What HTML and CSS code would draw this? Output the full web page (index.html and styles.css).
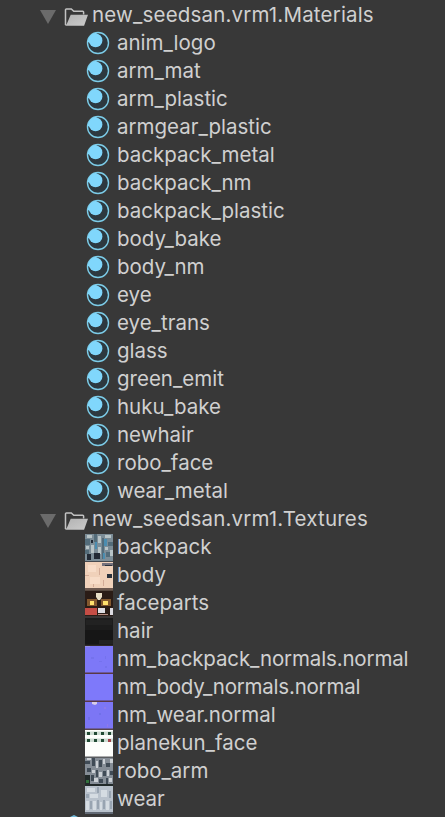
FILE: index.html
```html
<!DOCTYPE html>
<html lang="en">
<head>
<meta charset="utf-8">
<title>Project</title>
<link rel="stylesheet" href="styles.css">
</head>
<body>
<svg class="defs" width="0" height="0" aria-hidden="true">
  <defs>
    <linearGradient id="fold" x1="0" y1="0" x2="1" y2="1"><stop offset="0" stop-color="#b2b2b2"/><stop offset="1" stop-color="#cbcbcb"/></linearGradient>
    <filter id="soft" x="0" y="0" width="1" height="1"><feGaussianBlur stdDeviation=".7" edgeMode="duplicate"/></filter>
  </defs>
  <symbol id="arrow" viewBox="0 0 16 14"><path d="M0 0H16L8 14Z" fill="#6b6b6b"/></symbol>
  <symbol id="folder" viewBox="0 0 24 18">
    <path d="M1.5 17V1.8Q1.5 .9 2.4.9H7.3L9.8 3.2H18.7Q19.6 3.2 19.6 4.1V6.4" fill="none" stroke="#c2c2c2" stroke-width="1.5"/>
    <path d="M6.7 6.8H24L20.1 17.8H1L2.8 16Z" fill="url(#fold)"/>
  </symbol>
  <symbol id="material" viewBox="0 0 24 24">
    <circle cx="12" cy="12" r="10.5" fill="#2d3940" stroke="#7ccce8" stroke-width="1.4"/>
    <circle cx="9.6" cy="9.4" r="6.8" fill="#80d7fc"/>
    <path d="M1.8 11A10 10 0 0 1 11 1.8L8 6L5 12Z" fill="#80d7fc"/>
  </symbol>
  <symbol id="cube" viewBox="0 0 24 24"><path d="M12 0L22 5V17L12 23L2 17V5Z" fill="#70b8d8"/></symbol>
</svg>
<main class="tree">
  <div class="row folder"><svg class="arrow"><use href="#arrow"/></svg><svg class="dir"><use href="#folder"/></svg><span>new_seedsan.vrm1.Materials</span></div>
  <div class="row"><svg class="mat"><use href="#material"/></svg><span>anim_logo</span></div>
  <div class="row"><svg class="mat"><use href="#material"/></svg><span>arm_mat</span></div>
  <div class="row"><svg class="mat"><use href="#material"/></svg><span>arm_plastic</span></div>
  <div class="row"><svg class="mat"><use href="#material"/></svg><span>armgear_plastic</span></div>
  <div class="row"><svg class="mat"><use href="#material"/></svg><span>backpack_metal</span></div>
  <div class="row"><svg class="mat"><use href="#material"/></svg><span>backpack_nm</span></div>
  <div class="row"><svg class="mat"><use href="#material"/></svg><span>backpack_plastic</span></div>
  <div class="row"><svg class="mat"><use href="#material"/></svg><span>body_bake</span></div>
  <div class="row"><svg class="mat"><use href="#material"/></svg><span>body_nm</span></div>
  <div class="row"><svg class="mat"><use href="#material"/></svg><span>eye</span></div>
  <div class="row"><svg class="mat"><use href="#material"/></svg><span>eye_trans</span></div>
  <div class="row"><svg class="mat"><use href="#material"/></svg><span>glass</span></div>
  <div class="row"><svg class="mat"><use href="#material"/></svg><span>green_emit</span></div>
  <div class="row"><svg class="mat"><use href="#material"/></svg><span>huku_bake</span></div>
  <div class="row"><svg class="mat"><use href="#material"/></svg><span>newhair</span></div>
  <div class="row"><svg class="mat"><use href="#material"/></svg><span>robo_face</span></div>
  <div class="row"><svg class="mat"><use href="#material"/></svg><span>wear_metal</span></div>
  <div class="row folder"><svg class="arrow"><use href="#arrow"/></svg><svg class="dir"><use href="#folder"/></svg><span>new_seedsan.vrm1.Textures</span></div>
  <div class="row texture"><svg class="thumb" viewBox="0 0 28 28"><g filter="url(#soft)">
    <path fill="#7b8d97" d="M0 0H28V28H0Z"/>
    <path fill="#536c7a" d="M0 5H5V11H0ZM9 0H12V8H9ZM17 4H19V25H17ZM23 8H28V12H23ZM0 16H4V20H0ZM21 18H25V23H21Z"/>
    <path fill="#b8c4c7" d="M2 1H7V4H2ZM13 2H16V9H13ZM20 1H26V4H20ZM6 11H9V19H6ZM13 13H16V20H13ZM20 13H23V16H20ZM25 16H28V22H25ZM1 12H4V15H1Z"/>
    <path fill="#4c8db0" d="M19 5H22V12H19ZM10 8H12V15H10ZM18 19H20V25H18Z"/>
    <path fill="#202c35" d="M2 20H6V26H2ZM9 19H15V25H9ZM6 6H8V9H6Z"/>
    <path fill="#454a50" d="M0 27H28V28H0Z"/></g></svg><span>backpack</span></div>
  <div class="row texture"><svg class="thumb" viewBox="0 0 28 28"><g filter="url(#soft)">
    <path fill="#f0d1ba" d="M0 0H28V28H0Z"/>
    <path fill="#f7dcc8" d="M3 3H11V10H3ZM5 15H15V22H5Z"/>
    <path fill="#d3ab97" d="M14 6H15V13H14ZM0 13H4V14H0ZM8 22H9V25H8ZM18 18H19V24H18Z"/>
    <path fill="#76727d" d="M17 1H28V4H17Z"/>
    <path fill="#29313c" d="M20 3H27V4H20ZM22 12H27V16H22Z"/>
    <path fill="#6c594f" d="M0 26H28V28H0Z"/></g></svg><span>body</span></div>
  <div class="row texture"><svg class="thumb" viewBox="0 0 28 28"><g filter="url(#soft)">
    <path fill="#2b1b17" d="M0 0H28V28H0Z"/>
    <path fill="#574941" d="M0 0H28V1H0Z"/>
    <path fill="#e9dfc6" d="M11 3H17V7L15 10H13L11 7Z"/>
    <path fill="#82592e" d="M2 9H12V16H2ZM16 9H26V16H16Z"/>
    <path fill="#ffe16d" d="M5 11H9V15H5ZM18 11H23V15H18Z"/>
    <path fill="#c54d44" d="M0 18H12V25H0Z"/>
    <path fill="#dddce2" d="M13 18H20V23H13ZM25 18H28V25H25Z"/>
    <path fill="#b58b80" d="M13 24H23V25H13Z"/>
    <path fill="#393636" d="M0 26H28V28H0Z"/></g></svg><span>faceparts</span></div>
  <div class="row texture"><svg class="thumb" viewBox="0 0 28 28"><g filter="url(#soft)">
    <path fill="#1d1d1d" d="M0 0H28V28H0Z"/><path fill="#151515" d="M0 12H28V26H0Z"/><path fill="#242424" d="M1 2H27V7H1ZM14 22H28V26H14Z"/><path fill="#332c28" d="M0 27H28V28H0Z"/></g></svg><span>hair</span></div>
  <div class="row texture"><svg class="thumb" viewBox="0 0 28 28"><g filter="url(#soft)"><path fill="#7d78f7" d="M0 0H28V28H0Z"/><path fill="#938ee8" d="M0 0H5V1H0Z"/><path fill="#7572ed" d="M6 11H9V13H6ZM14 15H17V16H14ZM20 20H22V22H20ZM20 10H21V13H20Z"/></g><path fill="#5a3945" d="M0 26.5H28V28H0Z"/></svg><span class="tight">nm_backpack_normals.normal</span></div>
  <div class="row texture"><svg class="thumb" viewBox="0 0 28 28"><path fill="#7e79fa" d="M0 0H28V28H0Z"/><path fill="#5a3945" d="M0 26.5H28V28H0Z"/></svg><span class="tighter">nm_body_normals.normal</span></div>
  <div class="row texture"><svg class="thumb" viewBox="0 0 28 28"><g filter="url(#soft)"><path fill="#7b76f5" d="M0 0H28V28H0Z"/><path fill="#d8cde9" d="M7 0H12V2L10 3L7 2Z"/><path fill="#8f79ea" d="M19 5H21V7H19ZM22 22H23V25H22Z"/><path fill="#7070e9" d="M3 15H5V18H3ZM14 11H16V13H14Z"/></g><path fill="#5a454c" d="M0 26.5H28V28H0Z"/></svg><span>nm_wear.normal</span></div>
  <div class="row texture"><svg class="thumb" viewBox="0 0 28 28"><g filter="url(#soft)"><path fill="#fdfefc" d="M0 0H28V28H0Z"/><path fill="#cddcd3" d="M0 1.5H28V5H0ZM0 8.5H28V12H0Z"/><path fill="#234b36" d="M2 2H5V5H2ZM9 2H12V5H9ZM16 2H19V5H16ZM23 2H26V5H23ZM2 9H5V12H2ZM9 9H12V12H9ZM16 9H19V12H16Z"/><path fill="#a34248" d="M23 9H26V12H23Z"/></g><path fill="#5a5d60" d="M0 26.5H28V28H0Z"/></svg><span>planekun_face</span></div>
  <div class="row texture"><svg class="thumb" viewBox="0 0 28 28"><g filter="url(#soft)">
    <path fill="#858d96" d="M0 0H28V28H0Z"/>
    <path fill="#414b56" d="M0 3H5V6H0ZM7 0H10V8H7ZM14 2H17V9H14ZM21 5H25V9H21ZM2 10H6V14H2ZM11 12H13V19H11ZM18 13H21V18H18ZM25 13H28V17H25ZM6 17H9V23H6ZM14 21H18V25H14ZM21 20H23V26H21Z"/>
    <path fill="#cbd0d5" d="M2 0H6V2H2ZM11 3H13V10H11ZM18 1H20V6H18ZM25 1H28V5H25ZM7 12H10V15H7ZM14 14H17V19H14ZM22 12H24V18H22ZM9 20H13V24H9ZM24 20H27V24H24Z"/>
    <path fill="#202b2a" d="M0 17H5V26H0ZM0 26H28V28H0Z"/><path fill="#33713e" d="M1 22H4V25H1Z"/></g></svg><span>robo_arm</span></div>
  <div class="row texture"><svg class="thumb" viewBox="0 0 28 28"><g filter="url(#soft)">
    <path fill="#b9c2cc" d="M0 0H28V28H0Z"/>
    <path fill="#d5dce2" d="M2 2H10V6H2ZM5 8H13V12H5ZM16 4H22V11H16ZM1 15H4V24H1ZM8 15H11V24H8ZM15 16H17V24H15ZM21 15H24V24H21Z"/>
    <path fill="#98a4b1" d="M12 1H14V7H12ZM1 8H4V12H1ZM24 5H26V12H24ZM5 15H7V23H5ZM12 14H14V23H12ZM18 14H20V23H18ZM25 15H27V23H25Z"/>
    <path fill="#626b75" d="M0 26H28V28H0Z"/></g></svg><span>wear</span></div>
  <div class="row partial"><svg class="mat"><use href="#cube"/></svg></div>
</main>
</body>
</html>
```
FILE: styles.css
```css
html, body {
  margin: 0;
  height: 100%;
  overflow: hidden;
  background: #383838;
}

.defs {
  display: block;
}

.tree {
  padding-top: 1px;
  color: #d0d0d0;
  font: 400 20.5px/28px Inter, "Liberation Sans", sans-serif;
}

.row {
  display: flex;
  align-items: center;
  height: 28px;
  padding-left: 85px;
  white-space: nowrap;
}

.row span {
  margin-bottom: 1px;
}

.row.folder {
  padding-left: 40px;
  letter-spacing: 0.18px;
}

.row.texture {
  align-items: flex-start;
}

.row.partial {
  padding-left: 61px;
}

.row .tight {
  letter-spacing: -0.14px;
}

.row .tighter {
  letter-spacing: -0.22px;
}

.row svg {
  display: block;
  flex: none;
}

.arrow {
  width: 16px;
  height: 14px;
  margin-top: 4px;
  margin-right: 8px;
}

.dir {
  width: 24px;
  height: 18px;
  margin-top: 3px;
  margin-right: 4px;
}

.mat {
  width: 24px;
  height: 24px;
  margin: 0 7px 0 1px;
}

.thumb {
  width: 28px;
  height: 28px;
  margin-top: 1px;
  margin-right: 4px;
}
```
